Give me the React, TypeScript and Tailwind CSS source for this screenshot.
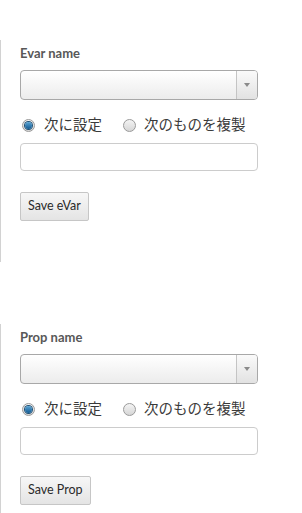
import { useState } from 'react';

type SectionProps = {
  label: string;
  button: string;
};

function Radio({ checked }: { checked: boolean }) {
  return (
    <span className="relative flex h-[13px] w-[13px] shrink-0 items-center justify-center rounded-full border border-[#9a9a9a] bg-gradient-to-b from-[#f4f4f4] to-[#d6d6d6]">
      {checked && (
        <span className="h-[7px] w-[7px] rounded-full bg-gradient-to-b from-[#5aa6d6] to-[#0f5a92] shadow-[0_0_0_1px_#1d4f74]" />
      )}
    </span>
  );
}

function VarSection({ label, button }: SectionProps) {
  const [mode, setMode] = useState<'set' | 'copy'>('set');

  return (
    <div className="flex h-[222px] flex-col border-l border-[#d2d2d2] pl-[19px] pt-[5px]">
      <div className="text-[13px] font-bold leading-[16px] text-[#585858]">{label}</div>

      {/* select */}
      <div className="mt-[9px] flex h-[30px] w-[238px] overflow-hidden rounded-[4px] border border-[#a8a8a8] bg-gradient-to-b from-[#ffffff] to-[#ececec]">
        <div className="flex-1" />
        <div className="flex w-[21px] items-center justify-center border-l border-[#c4c4c4] bg-gradient-to-b from-[#fafafa] to-[#e2e2e2]">
          <svg width="6" height="4" viewBox="0 0 6 4">
            <path d="M0 0h6L3 4z" fill="#8a8a8a" />
          </svg>
        </div>
      </div>

      {/* radios */}
      <div className="mt-[15px] flex h-[20px] items-center text-[14.5px] text-[#3a3a3a]">
        <button type="button" onClick={() => setMode('set')} className="flex items-center gap-[9px] pl-[2px]">
          <Radio checked={mode === 'set'} />
          <span>次に設定</span>
        </button>
        <button type="button" onClick={() => setMode('copy')} className="ml-[21px] flex items-center gap-[8px]">
          <Radio checked={mode === 'copy'} />
          <span>次のものを複製</span>
        </button>
      </div>

      {/* text input */}
      <input
        type="text"
        className="mt-[8px] h-[28px] w-[238px] rounded-[4px] border border-[#cccccc] bg-white px-2 text-[13px] outline-none"
      />

      <button
        type="button"
        className="mt-[21px] h-[29px] w-fit rounded-[2px] border border-[#c6c6c6] bg-gradient-to-b from-[#f7f7f7] to-[#e4e4e4] px-[7px] text-[12.5px] text-[#2a2a2a]"
      >
        {button}
      </button>
    </div>
  );
}

export default function App() {
  return (
    <div
      className="h-[513px] w-[302px] overflow-hidden bg-white pt-[40px]"
      style={{ fontFamily: 'Lato, "Noto Sans CJK JP", sans-serif' }}
    >
      <div className="flex flex-col gap-[62px]">
        <VarSection label="Evar name" button="Save eVar" />
        <VarSection label="Prop name" button="Save Prop" />
      </div>
    </div>
  );
}
